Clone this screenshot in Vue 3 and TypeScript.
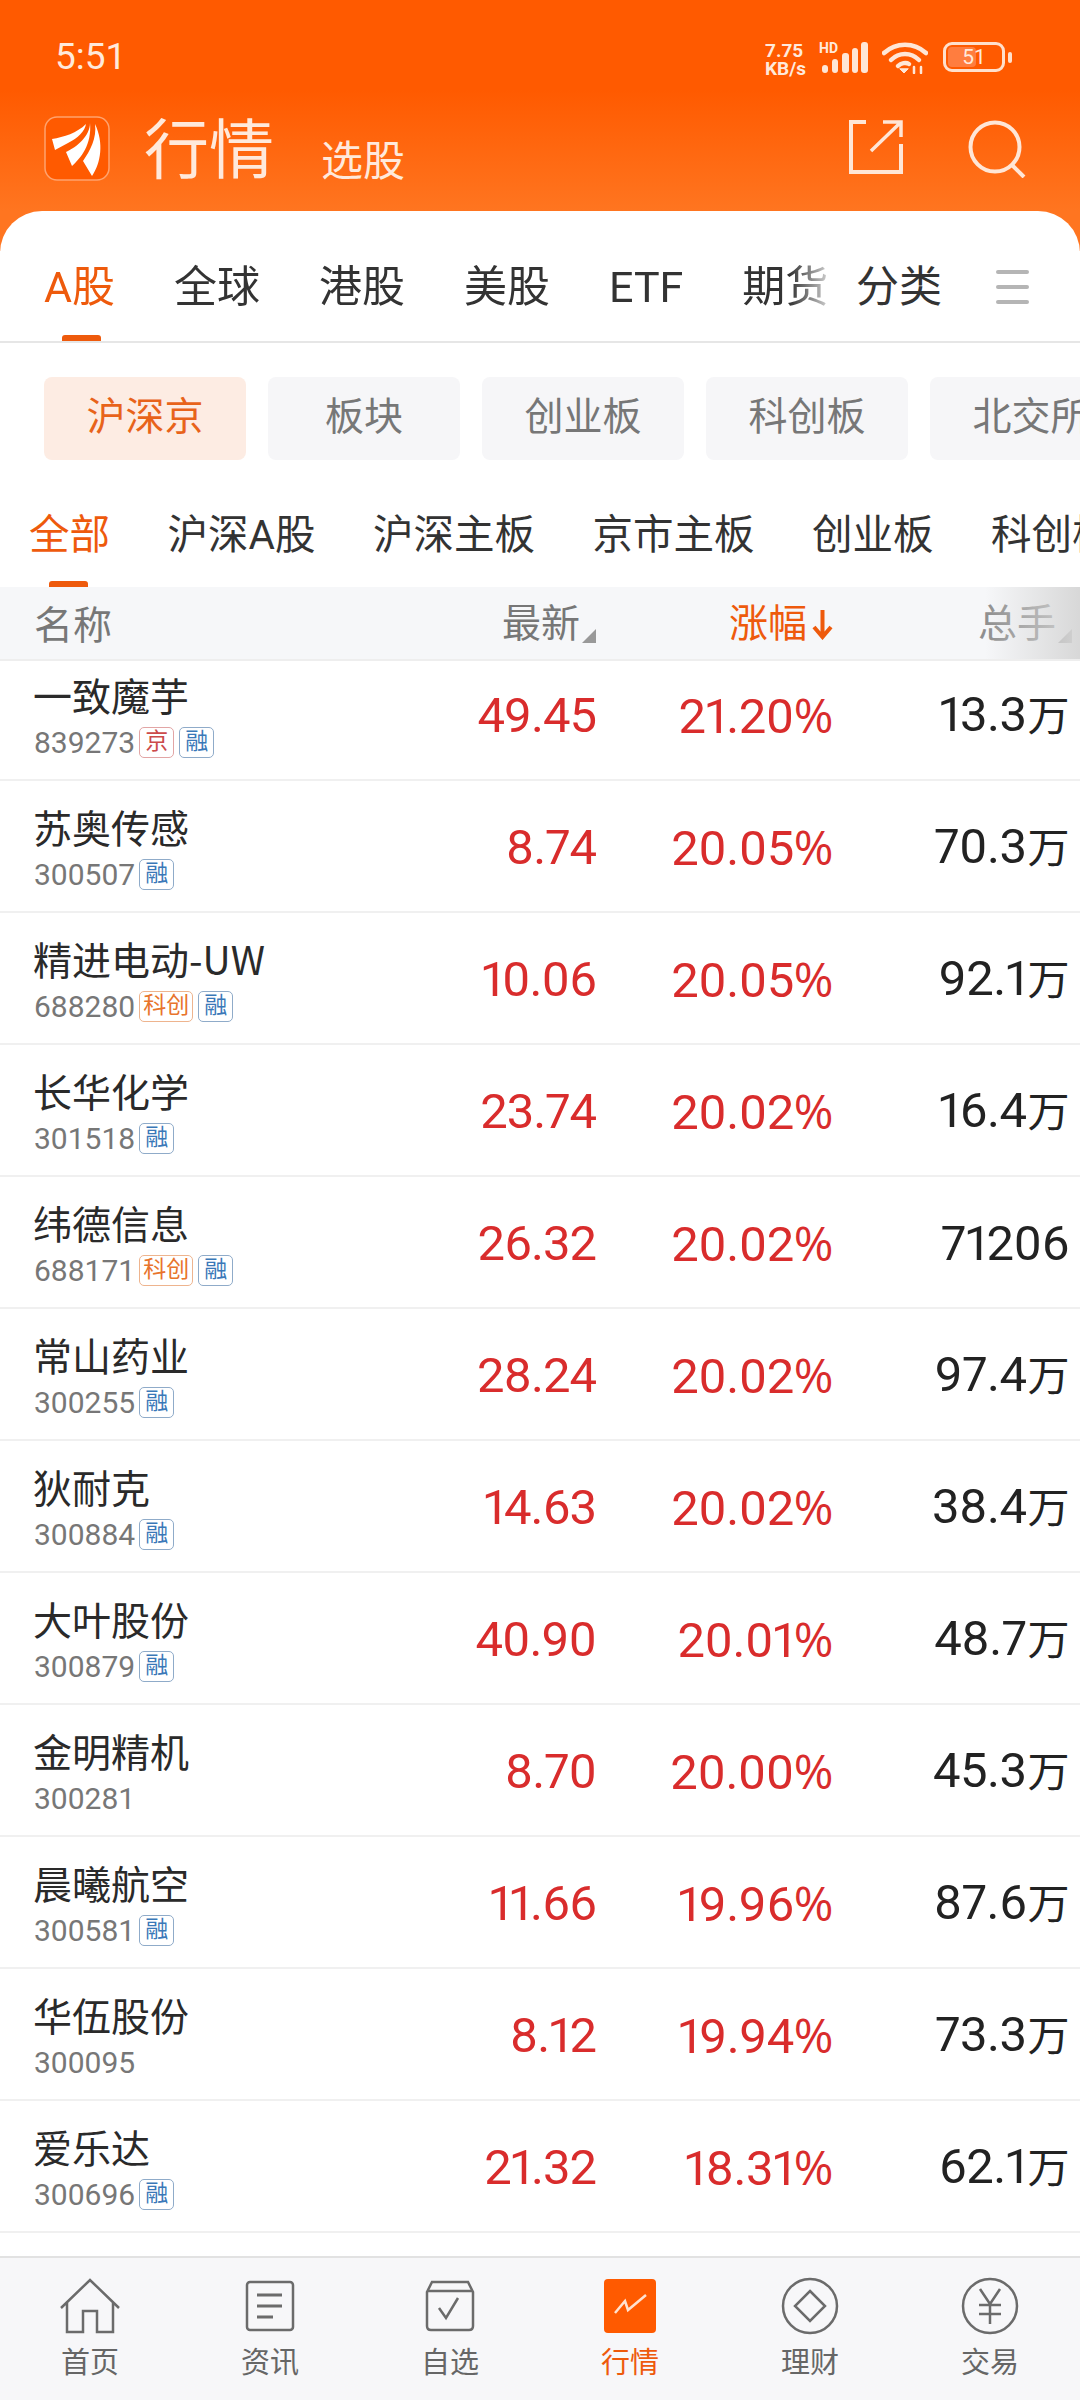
<template>
  <div class="page">
    <header class="top">
      <div class="status">
        <span class="status__time">5:51</span>
        <div class="status__right">
          <div class="net">7.75<br />KB/s</div>
          <div class="signal">
            <span class="signal__hd">HD</span>
            <svg width="46" height="31" viewBox="0 0 46 31" fill="#ffe6d6">
              <rect x="0" y="23" width="6" height="8" rx="3" />
              <rect x="10" y="17" width="6" height="14" rx="3" />
              <rect x="20" y="11" width="7" height="20" rx="3" />
              <rect x="30" y="6" width="6" height="25" rx="3" />
              <rect x="39" y="0" width="7" height="31" rx="3" />
            </svg>
          </div>
          <svg class="wifi" width="46" height="32" viewBox="0 0 46 32" fill="none" stroke="#ffe6d6" stroke-width="4.5" stroke-linecap="round">
            <path d="M2 11C14 0 32 0 44 11" />
            <path d="M9 18C17 10 29 10 37 18" />
            <path d="M16 24C19 21 24 20 27 22" />
            <path d="M18 27l4 4 4-4z" fill="#ffe6d6" stroke-width="1" />
            <path d="M32 25v6M39 25v6" stroke-width="2.5" />
          </svg>
          <div class="battery">
            <div class="battery__body">
              <div class="battery__fill" />
              <span class="battery__num">51</span>
            </div>
            <div class="battery__tip" />
          </div>
        </div>
      </div>
      <div class="brand">
        <svg class="brand__logo" width="66" height="65" viewBox="0 0 66 65">
          <rect x="1" y="1" width="64" height="63" rx="12" fill="#ff5a00" stroke="#ffa36e" stroke-width="1.5" />
          <path d="M8 23C20 21 33 17 42 8C41 15 34 22 24 27L11 34Z" fill="#fff" />
          <path d="M46 7C46 20 33 31 22 36L28 50C37 42 48 28 46 7Z" fill="#fff" />
          <path d="M51 8C53 22 46 35 39 45L48 60C57 47 60 27 51 8Z" fill="#fff" />
        </svg>
        <span class="brand__title">行情</span>
        <span class="brand__sub">选股</span>
        <div class="brand__actions">
          <svg width="54" height="54" viewBox="0 0 54 54" fill="none" stroke="#ffe6d6" stroke-width="4">
            <path d="M17 2H2V52H52V24" />
            <path d="M22 31L52 2M34 2H52V17" stroke-width="3.5" />
          </svg>
          <svg width="60" height="58" viewBox="0 0 60 58" fill="none" stroke="#ffe6d6" stroke-width="4">
            <circle cx="27" cy="27" r="24.5" />
            <path d="M44 45L56 57" />
          </svg>
        </div>
      </div>
    </header>

    <main class="card">
      <nav class="tabs">
        <div class="tabs__scroll">
          <span v-for="(t, i) in tabs" :key="t" class="tabs__item" :class="{ 'tabs__item--on': i === 0 }">{{ t }}</span>
        </div>
        <span class="tabs__fixed">分类</span>
        <div class="tabs__menu"><i /><i /><i /></div>
      </nav>

      <div class="chips">
        <span v-for="(c, i) in chips" :key="c" class="chip" :class="{ 'chip--on': i === 0 }">{{ c }}</span>
      </div>

      <div class="subs">
        <span v-for="(s, i) in subs" :key="s" class="subs__item" :class="{ 'subs__item--on': i === 0 }">{{ s }}</span>
      </div>

      <div class="thead">
        <span class="thead__name">名称</span>
        <span class="thead__col">最新<i class="corner" /></span>
        <span class="thead__col thead__col--on">
          涨幅
          <svg width="21" height="32" viewBox="0 0 21 32" fill="none" stroke="#ee5a0c" stroke-width="4">
            <path d="M10.5 2V28M2 19L10.5 29L19 19" />
          </svg>
        </span>
        <span class="thead__col thead__col--dim">总手<i class="corner" /></span>
        <div class="thead__fade" />
      </div>

      <div class="list">
        <div v-for="r in rows" :key="r.code" class="row">
          <div class="row__name">
            <div class="row__title">{{ r.name }}</div>
            <div class="row__meta">
              <span class="row__code">{{ r.code }}</span>
              <span v-for="t in r.tags" :key="t" class="tag" :class="tagClass(t)">{{ t }}</span>
            </div>
          </div>
          <span class="row__num row__num--up row__num--price">{{ r.price }}</span>
          <span class="row__num row__num--up">{{ r.pct }}<span class="row__pct">%</span></span>
          <span class="row__num">{{ r.vol }}<span v-if="r.unit" class="row__unit">{{ r.unit }}</span></span>
        </div>
      </div>
    </main>

    <footer class="nav">
      <div v-for="n in navs" :key="n.label" class="nav__item" :class="{ 'nav__item--on': n.label === '行情' }">
        <div class="nav__icon">
          <svg v-if="n.icon === 'home'" width="60" height="56" viewBox="0 0 60 56" fill="none" stroke="#6b6b6b" stroke-width="2.5">
            <path d="M1 30L30 2L59 30M7 25V54H23V33H37V54H53V25" />
          </svg>
          <svg v-else-if="n.icon === 'news'" width="50" height="52" viewBox="0 0 50 52" fill="none" stroke="#6b6b6b" stroke-width="2.5">
            <rect x="2" y="2" width="46" height="48" rx="3" />
            <path d="M12 15H37M12 26H37M12 37H28" stroke-width="3" />
          </svg>
          <svg v-else-if="n.icon === 'check'" width="50" height="52" viewBox="0 0 50 52" fill="none" stroke="#6b6b6b" stroke-width="2.5">
            <path d="M2 12L7 2H43L48 12V46Q48 50 44 50H6Q2 50 2 46Z" />
            <path d="M2 11H48" />
            <path d="M14 28L21 38L33 18" />
          </svg>
          <svg v-else-if="n.icon === 'market'" width="52" height="54" viewBox="0 0 52 54" fill="none">
            <rect width="52" height="54" rx="4" fill="#ff5a00" />
            <path d="M11 34L21 22L24 31L42 16" stroke="#ffe2d0" stroke-width="2.5" />
          </svg>
          <svg v-else-if="n.icon === 'finance'" width="58" height="58" viewBox="0 0 58 58" fill="none" stroke="#6b6b6b" stroke-width="2.5">
            <circle cx="29" cy="29" r="27" />
            <path d="M29 14L44 29L29 44L14 29Z" />
          </svg>
          <svg v-else width="58" height="58" viewBox="0 0 58 58" fill="none" stroke="#6b6b6b" stroke-width="2.5">
            <circle cx="29" cy="29" r="27" />
            <path d="M19 12L29 27L39 12M18 28H40M18 37H40M29 27V47" />
          </svg>
        </div>
        <span class="nav__label">{{ n.label }}</span>
      </div>
    </footer>
  </div>
</template>

<script setup lang="ts">
interface Row {
  name: string
  code: string
  tags: string[]
  price: string
  pct: string
  vol: string
  unit?: string
}

const tabs = ['A股', '全球', '港股', '美股', 'ETF', '期货']
const chips = ['沪深京', '板块', '创业板', '科创板', '北交所']
const subs = ['全部', '沪深A股', '沪深主板', '京市主板', '创业板', '科创板']

const rows: Row[] = [
  { name: '一致魔芋', code: '839273', tags: ['京', '融'], price: '49.45', pct: '21.20', vol: '13.3', unit: '万' },
  { name: '苏奥传感', code: '300507', tags: ['融'], price: '8.74', pct: '20.05', vol: '70.3', unit: '万' },
  { name: '精进电动-UW', code: '688280', tags: ['科创', '融'], price: '10.06', pct: '20.05', vol: '92.1', unit: '万' },
  { name: '长华化学', code: '301518', tags: ['融'], price: '23.74', pct: '20.02', vol: '16.4', unit: '万' },
  { name: '纬德信息', code: '688171', tags: ['科创', '融'], price: '26.32', pct: '20.02', vol: '71206' },
  { name: '常山药业', code: '300255', tags: ['融'], price: '28.24', pct: '20.02', vol: '97.4', unit: '万' },
  { name: '狄耐克', code: '300884', tags: ['融'], price: '14.63', pct: '20.02', vol: '38.4', unit: '万' },
  { name: '大叶股份', code: '300879', tags: ['融'], price: '40.90', pct: '20.01', vol: '48.7', unit: '万' },
  { name: '金明精机', code: '300281', tags: [], price: '8.70', pct: '20.00', vol: '45.3', unit: '万' },
  { name: '晨曦航空', code: '300581', tags: ['融'], price: '11.66', pct: '19.96', vol: '87.6', unit: '万' },
  { name: '华伍股份', code: '300095', tags: [], price: '8.12', pct: '19.94', vol: '73.3', unit: '万' },
  { name: '爱乐达', code: '300696', tags: ['融'], price: '21.32', pct: '18.31', vol: '62.1', unit: '万' },
]

const navs = [
  { label: '首页', icon: 'home' },
  { label: '资讯', icon: 'news' },
  { label: '自选', icon: 'check' },
  { label: '行情', icon: 'market' },
  { label: '理财', icon: 'finance' },
  { label: '交易', icon: 'trade' },
]

function tagClass(t: string) {
  if (t === '融') return 'tag--blue'
  if (t === '京') return 'tag--red'
  return 'tag--orange'
}
</script>

<style scoped>
.page {
  width: 1080px;
  height: 2400px;
  display: flex;
  flex-direction: column;
  overflow: hidden;
  background: #fff;
  font-family: Roboto, "Noto Sans CJK SC", sans-serif;
}

.top {
  height: 251px;
  flex: none;
  box-sizing: border-box;
  background: linear-gradient(#ff5a00 0, #ff5a00 90px, #ff7520 211px);
  color: #ffe9db;
}

.status {
  height: 116px;
  box-sizing: border-box;
  padding: 39px 68px 0 55px;
  display: flex;
  justify-content: space-between;
  align-items: flex-start;
}

.status__time {
  font-size: 37px;
  line-height: 36px;
}

.status__right {
  display: flex;
  align-items: flex-start;
  margin-top: 3px;
}

.net {
  width: 54px;
  font-size: 19px;
  line-height: 18px;
  font-weight: 700;
}

.signal {
  position: relative;
  width: 46px;
  margin-left: 3px;
}

.signal__hd {
  position: absolute;
  left: -3px;
  top: -1px;
  font-size: 14px;
  line-height: 14px;
  font-weight: 700;
}

.wifi {
  margin-left: 14px;
}

.battery {
  display: flex;
  align-items: center;
  margin-left: 15px;
}

.battery__body {
  position: relative;
  box-sizing: border-box;
  width: 62px;
  height: 30px;
  border: 3px solid #ffe0cc;
  border-radius: 9px;
  display: flex;
  align-items: center;
  justify-content: center;
}

.battery__fill {
  position: absolute;
  left: 2px;
  top: 2px;
  bottom: 2px;
  width: 28px;
  background: #ff7d3f;
  border-radius: 4px;
}

.battery__num {
  position: relative;
  font-size: 21px;
  line-height: 24px;
}

.battery__tip {
  width: 4px;
  height: 11px;
  margin-left: 3px;
  background: #ffe0cc;
  border-radius: 2px;
}

.brand {
  display: flex;
  align-items: flex-start;
  padding-left: 44px;
}

.brand__title {
  margin-left: 34px;
  font-size: 65px;
  line-height: 65px;
  margin-top: 3px;
}

.brand__sub {
  margin-left: 47px;
  font-size: 42px;
  line-height: 42px;
  margin-top: 25px;
}

.brand__actions {
  margin-left: auto;
  margin-right: 52px;
  display: flex;
  gap: 65px;
  align-items: flex-start;
  margin-top: 4px;
}

.card {
  flex: 1;
  min-height: 0;
  margin-top: -40px;
  background: #fff;
  border-radius: 42px 42px 0 0;
  position: relative;
  display: flex;
  flex-direction: column;
}

.tabs {
  height: 132px;
  flex: none;
  box-sizing: border-box;
  border-bottom: 2px solid #e6e6e6;
  display: flex;
  align-items: flex-start;
}

.tabs__scroll {
  width: 840px;
  flex: none;
  padding-left: 44px;
  box-sizing: border-box;
  display: flex;
  gap: 59px;
  overflow: hidden;
  -webkit-mask-image: linear-gradient(90deg, #000 94%, transparent 100%);
  mask-image: linear-gradient(90deg, #000 94%, transparent 100%);
}

.tabs__item {
  position: relative;
  height: 130px;
  line-height: 152px;
  font-size: 43px;
  color: #333;
  flex: none;
}

.tabs__item--on {
  color: #ee5a0c;
}

.tabs__item--on::after {
  content: "";
  position: absolute;
  left: 18px;
  right: 14px;
  bottom: 0;
  height: 6px;
  border-radius: 3px 3px 0 0;
  background: #ee5a0c;
}

.tabs__fixed {
  margin-left: 16px;
  font-size: 43px;
  line-height: 152px;
  color: #333;
}

.tabs__menu {
  margin: 59px 0 0 54px;
  width: 33px;
  display: flex;
  flex-direction: column;
  gap: 11px;
}

.tabs__menu i {
  display: block;
  height: 4px;
  border-radius: 2px;
  background: #b5b5b5;
}

.chips {
  flex: none;
  padding: 34px 0 0 44px;
  display: flex;
  gap: 22px;
  overflow: hidden;
}

.chip {
  flex: none;
  box-sizing: border-box;
  min-width: 192px;
  height: 83px;
  padding: 0 42.5px;
  line-height: 80px;
  text-align: center;
  font-size: 39px;
  color: #777;
  background: #f6f6f8;
  border-radius: 8px;
}

.chip--on {
  color: #e8631a;
  background: #fdece3;
}

.subs {
  flex: none;
  height: 127px;
  box-sizing: border-box;
  padding-left: 29px;
  display: flex;
  gap: 57.5px;
  overflow: hidden;
}

.subs__item {
  position: relative;
  flex: none;
  font-size: 40.5px;
  line-height: 150px;
  color: #333;
}

.subs__item--on {
  color: #ee5a0c;
}

.subs__item--on::after {
  content: "";
  position: absolute;
  left: 20px;
  width: 39px;
  bottom: 0;
  height: 6px;
  border-radius: 3px 3px 0 0;
  background: #ee5a0c;
}

.thead,
.row {
  display: grid;
  grid-template-columns: 1fr 196px 237px 236px;
  padding: 0 11px 0 34px;
}

.thead {
  position: relative;
  flex: none;
  height: 74px;
  box-sizing: border-box;
  align-items: center;
  background: #f6f7f9;
  border-bottom: 2px solid #eeeeee;
  font-size: 39px;
  color: #777;
}

.thead__name {
  margin-top: -3px;
}

.thead__col {
  display: flex;
  justify-content: flex-end;
  align-items: flex-end;
  gap: 2px;
  line-height: 50px;
  padding-top: 2px;
}

.thead__col--on {
  color: #ee5a0c;
  gap: 5px;
  align-items: center;
}

.thead__col--dim {
  color: #8f8f8f;
  margin-right: -3px;
}

.corner {
  width: 14px;
  height: 14px;
  margin-bottom: 6px;
  background: #999;
  clip-path: polygon(100% 0, 100% 100%, 0 100%);
}

.thead__fade {
  position: absolute;
  top: 0;
  bottom: 0;
  right: 0;
  width: 95px;
  background: linear-gradient(90deg, rgba(216, 216, 216, 0), rgba(214, 214, 214, 0.95));
}

.list {
  flex: 1;
  min-height: 0;
  overflow: hidden;
}

.row {
  height: 132px;
  box-sizing: border-box;
  border-bottom: 2px solid #f0f0f0;
  align-items: center;
}

.row:first-child {
  margin-top: -12px;
}

.row__name {
  align-self: start;
  padding-top: 22px;
}

.row__title {
  font-family: "Noto Sans CJK SC", sans-serif;
  font-size: 39px;
  line-height: 46px;
  color: #2a2a2a;
  white-space: nowrap;
  margin-left: -1px;
}

.row__meta {
  display: flex;
  align-items: center;
  height: 42px;
  margin-top: 4px;
}

.row__code {
  font-size: 30px;
  color: #777;
  margin-right: 4px;
}

.tag {
  box-sizing: border-box;
  height: 31px;
  min-width: 35px;
  padding: 0 3px;
  margin-right: 5px;
  border: 1.5px solid;
  border-radius: 5px;
  font-size: 23px;
  line-height: 27px;
  text-align: center;
}

.tag--blue {
  color: #3a78b8;
  border-color: #8fabc9;
}

.tag--red {
  color: #cc4a4a;
  border-color: #e2a5a5;
}

.tag--orange {
  color: #e8742c;
  border-color: #eeb48e;
}

.row__num {
  font-size: 49px;
  line-height: 60px;
  letter-spacing: -0.5px;
  font-variant-numeric: proportional-nums;
  text-align: right;
  color: #222;
  padding-top: 4px;
}

.row__num--up {
  color: #d92c2c;
}

.row__num--price {
  letter-spacing: -1px;
}

.row__pct {
  font-family: "Open Sans", sans-serif;
  font-size: 48px;
}

.row__unit {
  font-size: 42px;
  margin-left: 1px;
}

.nav {
  height: 144px;
  flex: none;
  box-sizing: border-box;
  background: #f7f7f9;
  border-top: 2px solid #e2e2e2;
  display: grid;
  grid-template-columns: repeat(6, 180px);
}

.nav__item {
  display: flex;
  flex-direction: column;
  align-items: center;
}

.nav__icon {
  height: 58px;
  margin-top: 19px;
  display: flex;
  align-items: center;
  justify-content: center;
}

.nav__label {
  margin-top: 10px;
  font-size: 29px;
  line-height: 36px;
  color: #666;
}

.nav__item--on .nav__label {
  color: #ee5a0c;
}
</style>

<style>
body {
  background: #fff;
}
</style>
